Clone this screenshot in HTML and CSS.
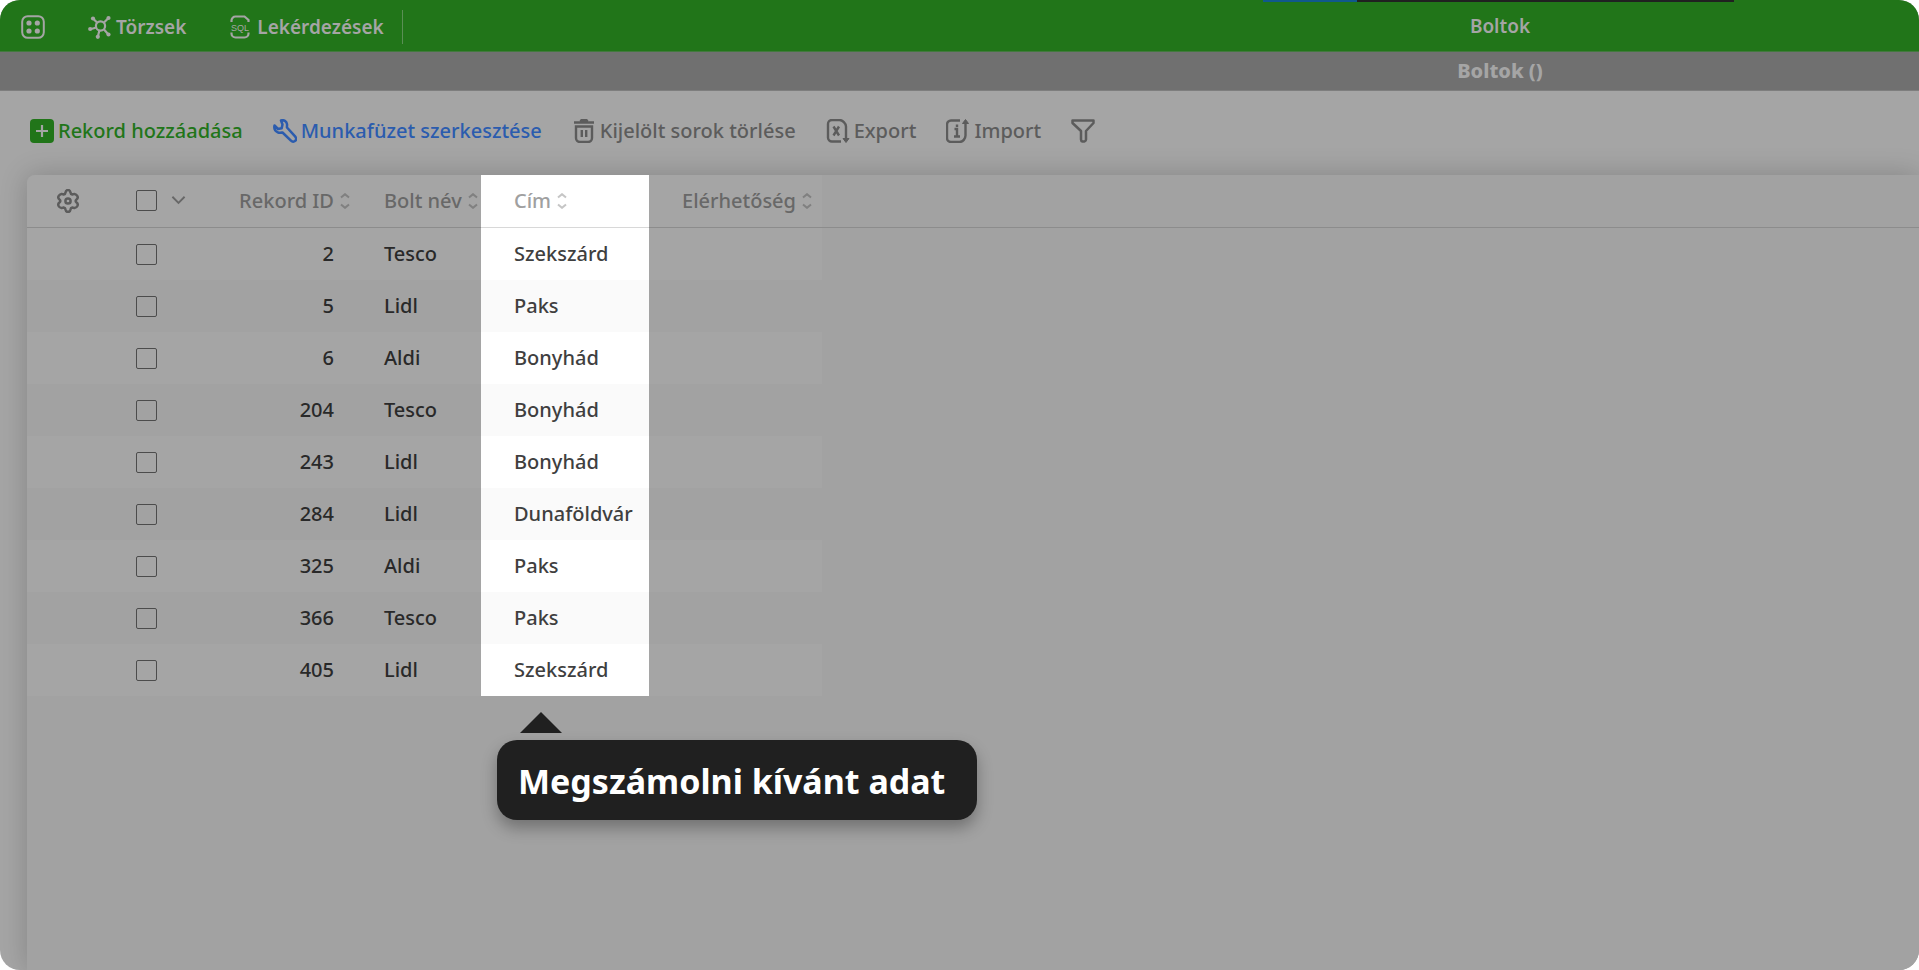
FILE: index.html
```html
<!DOCTYPE html>
<html lang="hu">
<head>
<meta charset="utf-8">
<title>Boltok</title>
<link rel="stylesheet" href="styles.css">
</head>
<body>
<div class="app">
  <header class="topbar">
    <nav class="menu">
      <button class="menu-item" aria-label="Menü"><svg class="icon" viewBox="0 0 24 24" fill="none" stroke="currentColor" stroke-width="2"><rect x="1.2" y="1.2" width="21.6" height="21.6" rx="5.5"/><g fill="currentColor" stroke="none"><circle cx="8" cy="8" r="2.6"/><circle cx="16.3" cy="8" r="2.6"/><circle cx="8" cy="16" r="2.6"/><circle cx="16.3" cy="16" r="2.6"/></g></svg></button>
      <button class="menu-item"><svg class="icon" viewBox="0 0 24 24" fill="none" stroke="currentColor" stroke-width="2.200"><circle cx="12.500" cy="11" r="4.600"/><path d="M9 7.500 5 3.500M16 7.500l4-4M16 14.500l4 4.500M7.700 12.700 3 14M11.300 15.700 10 21"/><g fill="currentColor" stroke="none"><circle cx="5" cy="3.500" r="2.100"/><circle cx="20.500" cy="3" r="2.100"/><circle cx="20.500" cy="19.500" r="2.100"/><circle cx="2.200" cy="14" r="2.100"/><circle cx="9.800" cy="21.800" r="2.100"/></g></svg>Törzsek</button>
      <button class="menu-item queries"><svg class="icon" viewBox="0 0 24 24" fill="none" stroke="currentColor" stroke-width="2.200"><path d="M2.500 7V5.500A4 4 0 0 1 6.500 1.500H15.500L19.500 5V7M2.500 17.500v1a4 4 0 0 0 4 4h9a4 4 0 0 0 4-4V17.500"/><text class="sql" x="11" y="15.500" text-anchor="middle">SQL</text></svg>Lekérdezések</button>
    </nav>
    <div class="bar-title">Boltok</div>
    <div class="strip"></div>
  </header>
  <div class="subbar"><h1 class="bar-title">Boltok ()</h1></div>
  <div class="toolbar">
    <button class="tool add"><svg class="icon" viewBox="0 0 24 24"><rect width="24" height="24" rx="4" fill="currentColor"/><path d="M12 6v12M6 12h12" stroke="#a5a5a5" stroke-width="2.200"/></svg>Rekord hozzáadása</button>
    <button class="tool edit"><svg class="icon" viewBox="0 0 24 24" fill="none" stroke="currentColor" stroke-width="2.500" stroke-linejoin="round" stroke-linecap="round"><path d="M8 1.500c2.800-1 5.600.8 6 3.700.2 1.500-.2 2.300 0 3.300l8.300 9.200c1.200 1.500 1 3.200-.1 4.200-1.200 1.100-3 1.100-4-.1L9.500 13.500c-1.500.2-3 .6-4.700-.2C2.200 12.200.9 9.500 1.500 6.500L5 10l3.700-.8.8-3.700z"/></svg>Munkafüzet szerkesztése</button>
    <button class="tool"><svg class="icon" viewBox="0 0 24 24" fill="none" stroke="currentColor" stroke-width="2.400"><path d="M2 3.500h20M8.500 2.500 9.500 1.200h5l1 1.300M4 7.500h16v11.500a4 4 0 0 1-4 4H8a4 4 0 0 1-4-4zM9.800 11v7M14.200 11v7"/></svg>Kijelölt sorok törlése</button>
    <button class="tool"><svg class="icon" viewBox="0 0 24 24" fill="none" stroke="currentColor" stroke-width="2.400"><path d="M15 22.500H6A4 4 0 0 1 2 18.500V5a4 4 0 0 1 4-4h7.500c3 0 6.500 3.500 6.500 6.500V21M7.500 7.500l5.500 9M13 7.500l-5.500 9"/><path d="M17 19.500h6l-3 4z" fill="currentColor" stroke-width="1"/></svg>Export</button>
    <button class="tool"><svg class="icon" viewBox="0 0 24 24" fill="none" stroke="currentColor" stroke-width="2.400"><path d="M14 1.500H5a4 4 0 0 0-4 4V19a4 4 0 0 0 4 4h8.500c3.500 0 6-3.500 6-6.500V4M8.500 10H11v7M8 17.500h6M11 5.500v2.500"/><path d="M16.500 4.500h6l-3-4z" fill="currentColor" stroke-width="1"/></svg>Import</button>
    <button class="tool" aria-label="Szűrő"><svg class="icon" viewBox="0 0 24 24" fill="none" stroke="currentColor" stroke-width="2.500" stroke-linejoin="round"><path d="M1.500 1.500h21V4L15 12v8.500c0 1-.5 1.500-1.500 2h-2c-1-.3-1.500-1-1.500-2V12L1.500 4z"/></svg></button>
  </div>
  <main class="card">
    <table class="grid">
      <colgroup><col class="c-gear"><col class="c-check"><col class="c-id"><col class="c-name"><col class="c-city"><col class="c-contact"></colgroup>
      <thead>
        <tr>
          <th class="gear"><button class="plain" aria-label="Beállítások"><svg class="icon" viewBox="0 0 24 24" fill="none" stroke="currentColor" stroke-width="2.500" stroke-linejoin="round"><path d="M9.500 3.500Q10 1 12 1t2.500 2.500q.2 1.700 1.800 2l2.200-.6q2 .2 3 2.300.8 2-.9 3.200-1 .9-1 1.600t1 1.600q1.700 1.200.9 3.200-1 2.100-3 2.300l-2.200-.6q-1.600.3-1.800 2Q14 23 12 23t-2.500-2.500q-.2-1.700-1.800-2l-2.200.6q-2-.2-3-2.300-.8-2 .9-3.200 1-.9 1-1.600t-1-1.600q-1.700-1.200-.9-3.200 1-2.100 3-2.300l2.200.6q1.600-.3 1.800-2z"/><circle cx="12" cy="12" r="2.600"/></svg></button></th>
          <th class="check"><span class="check-all"><input type="checkbox" aria-label="Összes kijelölése"><button class="plain" aria-label="Kijelölési lehetőségek"><svg class="chevron" viewBox="0 0 16 10" fill="none" stroke="currentColor" stroke-width="2"><path d="M1.500 1.500 8 8l6.500-6.500"/></svg></button></span></th>
          <th class="id"><button class="plain sort">Rekord ID<svg viewBox="0 0 10 16"><path d="M1 4.500 5 1.200l4 3.300M1 11.500l4 3.300 4-3.300"/></svg></button></th>
          <th><button class="plain sort">Bolt név<svg viewBox="0 0 10 16"><path d="M1 4.500 5 1.200l4 3.300M1 11.500l4 3.300 4-3.300"/></svg></button></th>
          <th class="lit"><button class="plain sort">Cím<svg viewBox="0 0 10 16"><path d="M1 4.500 5 1.200l4 3.300M1 11.500l4 3.300 4-3.300"/></svg></button></th>
          <th><button class="plain sort">Elérhetőség<svg viewBox="0 0 10 16"><path d="M1 4.500 5 1.200l4 3.300M1 11.500l4 3.300 4-3.300"/></svg></button></th>
        </tr>
      </thead>
      <tbody>
        <tr><td></td><td class="check"><input type="checkbox" aria-label="2"></td><td class="id">2</td><td>Tesco</td><td class="lit">Szekszárd</td><td></td></tr>
        <tr><td></td><td class="check"><input type="checkbox" aria-label="5"></td><td class="id">5</td><td>Lidl</td><td class="lit">Paks</td><td></td></tr>
        <tr><td></td><td class="check"><input type="checkbox" aria-label="6"></td><td class="id">6</td><td>Aldi</td><td class="lit">Bonyhád</td><td></td></tr>
        <tr><td></td><td class="check"><input type="checkbox" aria-label="204"></td><td class="id">204</td><td>Tesco</td><td class="lit">Bonyhád</td><td></td></tr>
        <tr><td></td><td class="check"><input type="checkbox" aria-label="243"></td><td class="id">243</td><td>Lidl</td><td class="lit">Bonyhád</td><td></td></tr>
        <tr><td></td><td class="check"><input type="checkbox" aria-label="284"></td><td class="id">284</td><td>Lidl</td><td class="lit">Dunaföldvár</td><td></td></tr>
        <tr><td></td><td class="check"><input type="checkbox" aria-label="325"></td><td class="id">325</td><td>Aldi</td><td class="lit">Paks</td><td></td></tr>
        <tr><td></td><td class="check"><input type="checkbox" aria-label="366"></td><td class="id">366</td><td>Tesco</td><td class="lit">Paks</td><td></td></tr>
        <tr><td></td><td class="check"><input type="checkbox" aria-label="405"></td><td class="id">405</td><td>Lidl</td><td class="lit">Szekszárd</td><td></td></tr>
      </tbody>
    </table>
    <div class="tip" role="tooltip">Megszámolni kívánt adat</div>
  </main>
</div>
</body>
</html>
```
FILE: styles.css
```css
* { box-sizing: border-box; }
body {
  margin: 0;
  background: #fff;
  font-family: "Noto Sans", "Open Sans", sans-serif;
  font-size: 20px;
  font-weight: 500;
  line-height: 24px;
}
button {
  font: inherit;
  color: inherit;
  background: none;
  border: 0;
  padding: 0;
}
.icon { width: 24px; height: 24px; flex: none; display: block; }
.app {
  min-height: 100vh;
  display: flex;
  flex-direction: column;
  border-radius: 20px;
  overflow: hidden;
  background: #a5a5a5;
}
.topbar, .subbar {
  display: grid;
  grid-template-columns: 1081fr 838fr;
  align-items: center;
  color: #a5a5a5;
  font-weight: 600;
}
.topbar {
  position: relative;
  height: 52px;
  background: #217519;
  border-bottom: 1px solid #43793f;
  font-size: 19px;
}
.subbar {
  height: 39px;
  background: #707070;
  border-bottom: 1px solid #7e7e7e;
}
.bar-title {
  grid-column: 2;
  margin: 0;
  text-align: center;
  font-size: inherit;
  font-weight: 600;
}
.subbar .bar-title { font-weight: 800; }
.strip {
  position: absolute;
  top: 0;
  left: 65.8%;
  width: 471px;
  height: 2px;
  background: linear-gradient(90deg, #10598c 94px, #202020 94px);
}
.menu {
  display: flex;
  align-items: center;
  gap: 43px;
  padding-left: 21px;
  padding-top: 2px;
}
.menu-item {
  display: flex;
  align-items: center;
  gap: 4px;
  height: 34px;
}
.queries { padding-right: 18px; border-right: 1px solid #5a8f55; }
.sql { font: 400 9px "Liberation Sans", sans-serif; fill: currentColor; stroke: none; }
.toolbar {
  display: flex;
  align-items: center;
  gap: 30px;
  height: 84px;
  padding: 0 30px 4px;
  color: #5c5c5c;
}
.tool { display: flex; align-items: center; gap: 4px; white-space: nowrap; }
.add { color: #217519; }
.edit { color: #2b5cae; }
.card {
  flex: 1;
  margin-left: 27px;
  background: #a2a2a2;
  border-top-left-radius: 8px;
  box-shadow: 0 0 28px rgba(0, 0, 0, .2);
  background-image: linear-gradient(#8c8c8c, #8c8c8c);
  background-size: 100% 1px;
  background-position: 0 52px;
  background-repeat: no-repeat;
}
.grid {
  table-layout: fixed;
  width: 795px;
  border-collapse: separate;
  border-spacing: 0;
  color: #292929;
}
.c-gear { width: 82px; }
.c-check { width: 98px; }
.c-id { width: 144px; }
.c-name { width: 130px; }
.c-city { width: 168px; }
.c-contact { width: 173px; }
th, td {
  height: 52px;
  padding: 0 0 0 33px;
  text-align: left;
  font-weight: 500;
  background: #a5a5a5;
  white-space: nowrap;
}
th {
  height: 53px;
  padding-bottom: 2px;
  color: #686868;
  border-bottom: 1px solid #8c8c8c;
}
th:first-child { border-top-left-radius: 8px; }
tbody tr:nth-child(even) td { background: #a2a2a2; }
th.lit { background: #fff; color: #a0a0a0; border-bottom-color: #d8d8d8; }
td.lit { background: #fff; color: #3f3f3f; }
tbody tr:nth-child(even) td.lit { background: #fafafa; }
th.gear { padding-left: 29px; color: #5c5c5c; }
th.check, td.check { padding-left: 27px; }
td.id { text-align: right; padding: 0 17px 0 0; }
th.id { text-align: right; padding: 0 1px 2px 0; }
.plain { display: inline-flex; align-items: center; vertical-align: middle; }
.sort { gap: 6px; }
.sort svg { width: 10px; height: 16px; fill: none; stroke: currentColor; stroke-width: 2; opacity: .6; }
.check-all { display: flex; align-items: center; gap: 14px; }
.chevron { width: 15px; height: 10px; }
input[type="checkbox"] {
  appearance: none;
  display: block;
  width: 21px;
  height: 21px;
  margin: 0;
  border: 1px solid #4c4c4c;
  border-radius: 2px;
}
.tip {
  position: relative;
  width: fit-content;
  margin: 44px 0 0 470px;
  padding: 17px 32px 15px 21px;
  border-radius: 20px;
  background: #202020;
  color: #fff;
  font-size: 34px;
  font-weight: 700;
  line-height: 48px;
  box-shadow: 0 8px 16px rgba(0, 0, 0, .3);
}
.tip::before {
  content: "";
  position: absolute;
  left: 23px;
  top: -28px;
  border: 21px solid transparent;
  border-top: 0;
  border-bottom-color: #202020;
}
```
